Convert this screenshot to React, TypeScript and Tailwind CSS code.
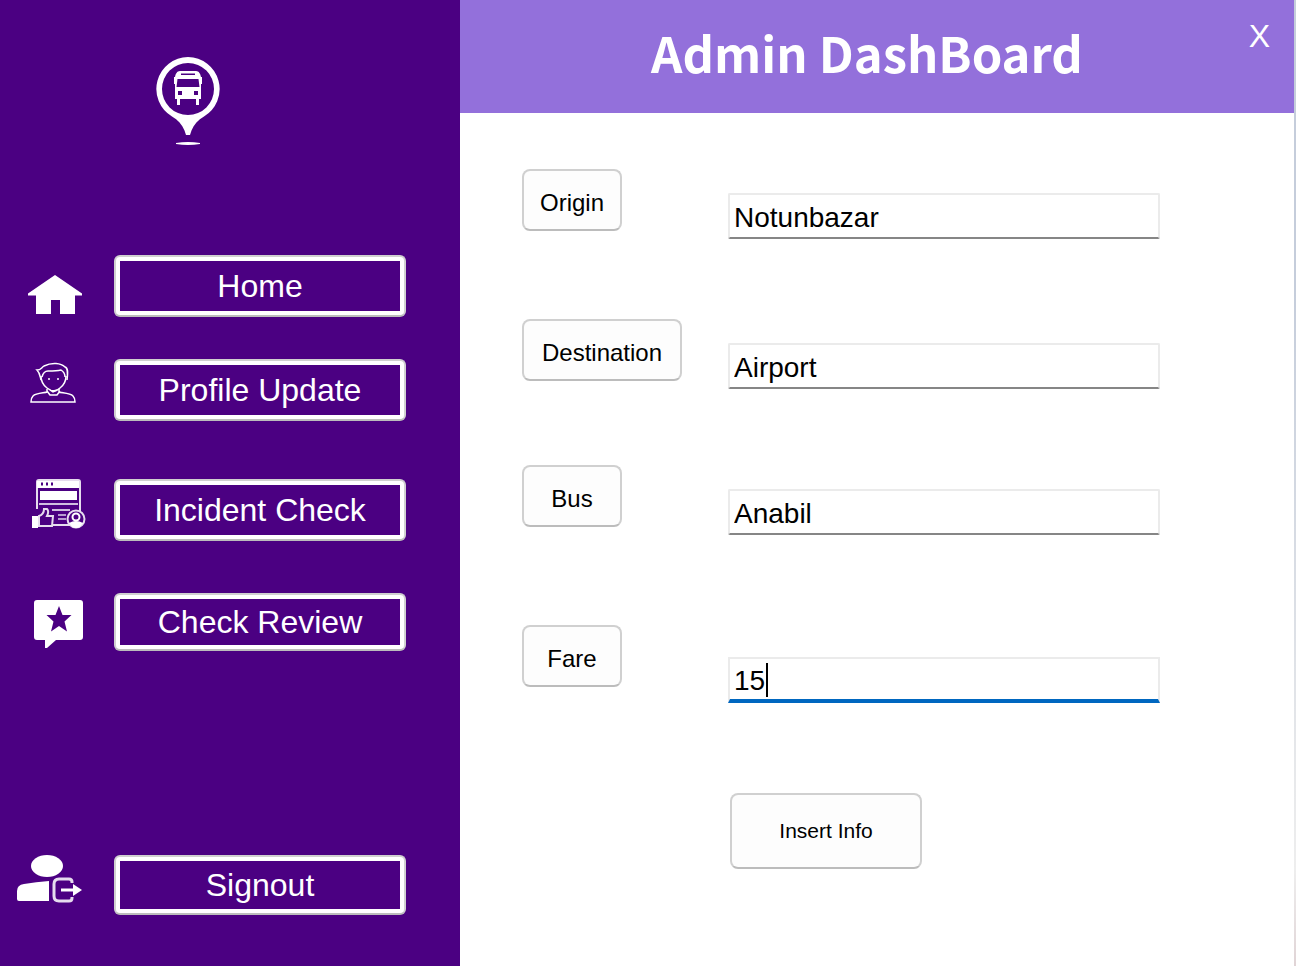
import React from "react";

function BusPinIcon() {
  return (
    <svg viewBox="0 0 64 90" className="h-[90px] w-16" fill="#fff" aria-hidden="true">
      <path
        fillRule="evenodd"
        d="M32 0a32 32 0 0 1 16 59.500c-6 3.500-10 8-12.500 14L34 78h-4l-1.500-4.500C26 67.500 22 63 16 59.500A32 32 0 0 1 32 0Zm0 6a26 26 0 1 0 0 52 26 26 0 0 0 0-52Z"
      />
      <path
        fillRule="evenodd"
        d="M24 14h16c3 0 4.500 3 5 6h1v7h-1v15h-2v6h-3v-6H24v6h-3v-6h-2V27h-1v-7h1c.5-3 2-6 5-6Zm1 2.500v1.500h14v-1.500Zm-3.500 5.500L20.500 30h23L42.500 22ZM22 34v4h4v-4Zm16 0v4h4v-4Z"
      />
      <path d="M20 86q12-2 24 0v1q-12 2-24 0Z" />
    </svg>
  );
}

function HomeIcon() {
  return (
    <svg viewBox="0 0 54 40" className="h-10 w-[54px]" fill="#fff" aria-hidden="true">
      <path d="M27 0 54 18.500v2h-7V39H32V25h-9v14H8V20.500H0v-2Z" />
    </svg>
  );
}

function ProfileIcon() {
  return (
    <svg viewBox="0 0 46 42" className="h-[42px] w-[46px]" fill="none" stroke="#fff" strokeWidth="1.500" aria-hidden="true">
      <path d="M11 18c-1-4-1-7-4-10 4 0 4-2 7-4 8-4 17-3 21 1 3 1 3 5 2 13" />
      <path d="M11 14c0 6 2 9 6 12 5 4 9 4 13 0 4-3 6-6 6-12" />
      <path d="M12 15c1-4 3-6 6-6 5 0 9 0 13-1 3 2 4 4 4 7" />
      <path d="M18 17h2m7 0h2" />
      <path d="M17 27v3c-2 1-11 1-14 4-2 2-2 3-2 6h44c0-3 0-4-2-6-3-3-12-3-14-4v-3M17 29l3 4h7l3-4M20 28l3 2 4-2" />
    </svg>
  );
}

function IncidentIcon() {
  return (
    <svg viewBox="0 0 54 50" className="h-[50px] w-[54px]" aria-hidden="true">
      <path d="M5 30V3q0-2 2-2h39q2 0 2 2v29M20 46h18" fill="none" stroke="#e6dcee" strokeWidth="2" />
      <path d="M5 2h42v7H5ZM8 12h37v9H8Z" fill="#fff" />
      <path d="M7 25h39M20 31h18" stroke="#d0bfe0" strokeWidth="2" />
      <path d="M9 5h2m3 0h2m3 0h2" stroke="#4b0082" strokeWidth="3" />
      <path d="M26 36h8m-8 4h8" stroke="#b79bd0" strokeWidth="2" />
      <path d="M0 37h6v12H0Z" fill="#fff" />
      <path d="M7 37c3-1 5-4 5-7h3c2 2 1 5 0 7h6l-1 10H7Z" fill="none" stroke="#e6dcee" strokeWidth="2" />
      <circle cx="44" cy="40" r="8.500" fill="none" stroke="#e6dcee" strokeWidth="2" />
      <circle cx="44" cy="38" r="3.500" fill="none" stroke="#fff" strokeWidth="2" />
      <path d="M37 44q7-4 14 0-3 5-7 5t-7-5Z" fill="#fff" />
    </svg>
  );
}

function ReviewIcon() {
  return (
    <svg viewBox="0 0 50 50" className="h-[50px] w-[50px]" aria-hidden="true">
      <path d="M3 1h43q3 0 3 3v34q0 3-3 3H22l-9 8h-2v-8H3q-3 0-3-3V4q0-3 3-3Z" fill="#fff" />
      <path d="m25 7 3.500 9H37.500l-7 6.500 2.500 10-8-5.500-8 5.500 2.500-10-7-6.500h9Z" fill="#4b0082" />
    </svg>
  );
}

function SignoutIcon() {
  return (
    <svg viewBox="0 0 66 48" className="h-12 w-[66px]" aria-hidden="true">
      <ellipse cx="31" cy="11" rx="16" ry="11" fill="#fff" />
      <path d="M3 46q-2 0-2-2v-8q0-6 7-7 12-2 25-3v20Z" fill="#fff" />
      <path d="M56 28v-1q0-3-3-3H43q-5 0-5 5v12q0 5 5 5h10q3 0 3-3v-1" fill="none" stroke="#e6dcee" strokeWidth="3" />
      <path d="M45 35h13" stroke="#fff" strokeWidth="3" />
      <path d="m57 29 9 6-9 6Z" fill="#fff" />
    </svg>
  );
}

type NavItemProps = {
  label: string;
  icon: React.ReactNode;
  className: string;
  height: string;
};

function NavItem({ label, icon, className, height }: NavItemProps) {
  return (
    <div className={`flex pr-[54px] ${className}`}>
      <div className="flex w-[114px] shrink-0 items-center">{icon}</div>
      <button
        type="button"
        className={`grow rounded-md border-2 border-[#d0d0d0] border-b-[#bcbcbc] bg-white p-1 text-[32px] leading-9 text-white ${height}`}
      >
        <span className="flex h-full items-center justify-center bg-[#4b0082]">{label}</span>
      </button>
    </div>
  );
}

type FieldProps = {
  id: string;
  label: string;
  value: string;
  row: string;
  button: string;
  input: string;
  caret?: boolean;
};

function Field({ id, label, value, row, button, input, caret }: FieldProps) {
  return (
    <div className={`flex items-start ${row}`}>
      <div className="w-[206px] shrink-0">
        <button
          type="button"
          id={`${id}-label`}
          className={`h-[62px] rounded-lg border-2 border-[#d0d0d0] border-b-[#bcbcbc] bg-[#fdfdfd] pt-1.5 text-2xl ${button}`}
        >
          {label}
        </button>
      </div>
      <div className={`relative grow ${input}`}>
        <input
          id={id}
          type="text"
          aria-labelledby={`${id}-label`}
          defaultValue={value}
          className={`block h-[46px] w-full border-2 border-[#ebebeb] bg-white px-1 pt-1 text-[28px] outline-none ${
            caret ? "border-b-4 border-b-[#0067c0]" : "rounded-xs border-b-[#868686]"
          }`}
        />
        {caret && <span className="absolute left-[38px] top-[6px] h-[34px] w-0.5 bg-black" />}
      </div>
    </div>
  );
}

export default function App() {
  return (
    <div className="flex min-h-screen bg-white font-['Liberation_Sans',Arial,sans-serif] text-black">
      <aside className="w-[460px] shrink-0 bg-[#4b0082] pt-[57px]">
        <div className="pl-[156px]">
          <BusPinIcon />
        </div>
        <nav>
          <NavItem label="Home" icon={<span className="pl-7 pt-[18px]"><HomeIcon /></span>} className="mt-[108px]" height="h-[62px]" />
          <NavItem label="Profile Update" icon={<span className="pb-[14px] pl-[30px]"><ProfileIcon /></span>} className="mt-[42px]" height="h-[62px]" />
          <NavItem label="Incident Check" icon={<span className="pb-3 pl-8"><IncidentIcon /></span>} className="mt-[58px]" height="h-[62px]" />
          <NavItem label="Check Review" icon={<span className="pl-[34px] pt-1"><ReviewIcon /></span>} className="mt-[52px]" height="h-[58px]" />
          <NavItem label="Signout" icon={<span className="pb-3 pl-4"><SignoutIcon /></span>} className="mt-[204px]" height="h-[60px]" />
        </nav>
      </aside>
      <main className="grow">
        <header className="relative flex h-[113px] justify-center bg-[#9370db] pr-5 pt-[22px] text-white">
          <h1 className="font-['Noto_Sans_CJK_JP',sans-serif] text-[49px] font-bold leading-[60px]">Admin DashBoard</h1>
          <button type="button" aria-label="Close" className="absolute right-6 top-[18px] text-[32px] leading-9">
            X
          </button>
        </header>
        <form className="pl-[62px] pr-[134px] pt-14" onSubmit={(e) => e.preventDefault()}>
          <Field id="origin" label="Origin" value="Notunbazar" row="" button="w-[100px]" input="mt-6" />
          <Field id="destination" label="Destination" value="Airport" row="mt-20" button="w-[160px]" input="mt-6" />
          <Field id="bus" label="Bus" value="Anabil" row="mt-[76px]" button="w-[100px]" input="mt-6" />
          <Field id="fare" label="Fare" value="15" row="mt-[90px]" button="w-[100px]" input="mt-8" caret />
          <button
            type="submit"
            className="ml-[208px] mt-[90px] h-[76px] w-48 rounded-lg border-2 border-[#d0d0d0] border-b-[#bcbcbc] bg-[#fdfdfd] text-[21px]"
          >
            Insert Info
          </button>
        </form>
      </main>
      <div className="w-0.5 shrink-0 bg-linear-to-b from-[#c5cddb] from-30% via-[#eeeeee] via-90% to-[#e0d4d6]" />
    </div>
  );
}
